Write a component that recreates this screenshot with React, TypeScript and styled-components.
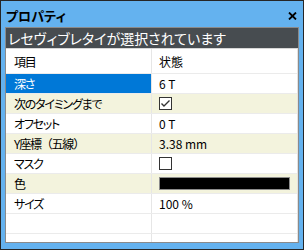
import React from "react";
import styled, { createGlobalStyle } from "styled-components";

const Global = createGlobalStyle`
  html, body { margin: 0; padding: 0; background: #ffffff; }
  body { font-family: "Noto Sans CJK JP", "Noto Sans", sans-serif; }
  * { box-sizing: border-box; }
`;

const Window = styled.div`
  width: 304px;
  height: 250px;
  border: 1px solid #262626;
  background: #64b2ef;
  display: flex;
  flex-direction: column;
  overflow: hidden;
`;

const TitleBar = styled.div`
  height: 26px;
  flex: none;
  display: flex;
  align-items: center;
  justify-content: space-between;
  padding: 3px 6px 0 5px;
`;

const Title = styled.span`
  font-size: 13px;
  font-weight: 700;
  color: #000;
  font-feature-settings: "palt";
  line-height: 1;
`;

const CloseButton = styled.span`
  display: flex;
  width: 9px;
  height: 8px;
`;

const Panel = styled.div`
  flex: 1;
  margin: 0 4px 6px 4px;
  border: 1px solid #8a8a8a;
  background: #ffffff;
  display: flex;
  flex-direction: column;
  overflow: hidden;
`;

const MessageBar = styled.div`
  flex: none;
  height: 21px;
  background: #474c50;
  border-bottom: 1px solid #d6d6d6;
  color: #ffffff;
  font-size: 14px;
  font-feature-settings: "palt";
  line-height: 20px;
  padding-left: 2px;
  white-space: nowrap;
  overflow: hidden;
`;

const Table = styled.div`
  flex: 1;
  border-right: 1px solid #e2e2e2;
  display: flex;
  flex-direction: column;
`;

const Row = styled.div<{ $shaded?: boolean; $header?: boolean }>`
  flex: none;
  height: ${(p) => (p.$header ? 25 : 20)}px;
  display: grid;
  grid-template-columns: 146px 1fr;
  background: ${(p) => (p.$shaded ? "#f3f3dd" : "#ffffff")};
  border-bottom: 1px solid #ebebeb;
`;

const NameCell = styled.div<{ $selected?: boolean; $fullWidthPunct?: boolean }>`
  display: flex;
  align-items: center;
  padding-left: 8px;
  font-size: 12px;
  letter-spacing: -1.2px;
  font-feature-settings: ${(p) => (p.$fullWidthPunct ? "normal" : '"palt"')};
  color: ${(p) => (p.$selected ? "#ffffff" : "#000000")};
  background: ${(p) => (p.$selected ? "#0078d7" : "transparent")};
  border-right: 1px solid #e6e6e6;
  white-space: nowrap;
`;

const ValueCell = styled.div<{ $selected?: boolean }>`
  display: flex;
  align-items: center;
  padding-left: 7px;
  font-size: 12px;
  font-feature-settings: "palt";
  color: #000000;
  background: ${(p) => (p.$selected ? "#ffffff" : "transparent")};
  white-space: nowrap;
`;

const CheckBox = styled.span`
  width: 13px;
  height: 13px;
  border: 1px solid #333333;
  background: #ffffff;
  display: flex;
  align-items: center;
  justify-content: center;
`;

const Swatch = styled.span<{ $color: string }>`
  width: 131px;
  height: 13px;
  border: 1px solid #8c8c8c;
  background: ${(p) => p.$color};
`;

type Item = {
  name: string;
  value?: string;
  check?: boolean;
  color?: string;
  selected?: boolean;
  shaded?: boolean;
  fullWidthPunct?: boolean;
};

const items: Item[] = [
  { name: "深さ", value: "6 T", selected: true },
  { name: "次のタイミングまで", check: true, shaded: true },
  { name: "オフセット", value: "0 T" },
  { name: "Y座標（五線）", value: "3.38 mm", shaded: true, fullWidthPunct: true },
  { name: "マスク", check: false },
  { name: "色", color: "#000000", shaded: true },
  { name: "サイズ", value: "100 %" },
  { name: "" },
  { name: "" },
];

function Value({ item }: { item: Item }) {
  if (item.check !== undefined) {
    return (
      <CheckBox>
        {item.check && (
          <svg width="11" height="11" viewBox="0 0 11 11">
            <polyline
              points="1.5,5.5 4,8 9.5,2.5"
              fill="none"
              stroke="#333"
              strokeWidth="1.4"
            />
          </svg>
        )}
      </CheckBox>
    );
  }
  if (item.color) return <Swatch $color={item.color} />;
  return <>{item.value}</>;
}

export default function App() {
  return (
    <>
      <Global />
      <Window>
        <TitleBar>
          <Title>プロパティ</Title>
          <CloseButton>
            <svg width="9" height="8" viewBox="0 0 9 8">
              <path d="M1 0.5 L8 7.5 M8 0.5 L1 7.5" stroke="#000" strokeWidth="1.8" />
            </svg>
          </CloseButton>
        </TitleBar>
        <Panel>
          <MessageBar>レセヴィブレタイが選択されています</MessageBar>
          <Table>
            <Row $header>
              <NameCell>項目</NameCell>
              <ValueCell>状態</ValueCell>
            </Row>
            {items.map((it, i) => (
              <Row key={i} $shaded={it.shaded}>
                <NameCell $selected={it.selected} $fullWidthPunct={it.fullWidthPunct}>
                  {it.name}
                </NameCell>
                <ValueCell $selected={it.selected}>
                  <Value item={it} />
                </ValueCell>
              </Row>
            ))}
          </Table>
        </Panel>
      </Window>
    </>
  );
}
